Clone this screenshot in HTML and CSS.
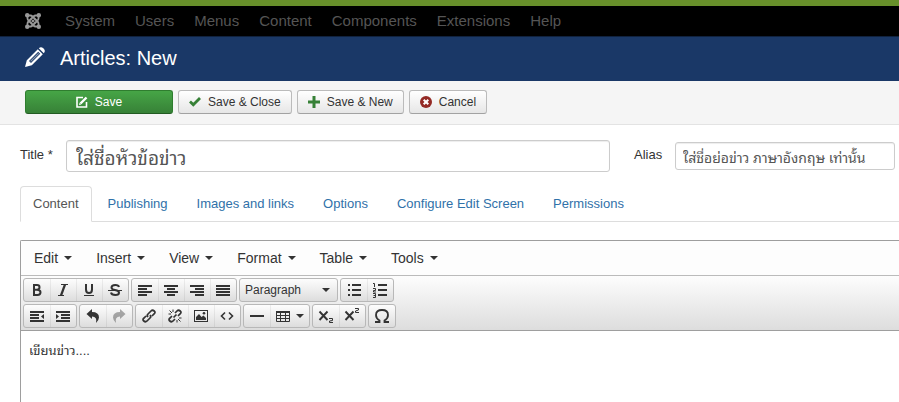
FILE: index.html
```html
<!DOCTYPE html>
<html lang="th">
<head>
    <meta charset="utf-8">
    <meta name="viewport" content="width=device-width, initial-scale=1">
    <title>Articles: New</title>
    <link rel="stylesheet" href="styles.css">
</head>
<body>
    <nav class="navbar">
        <a href="#" class="navbar-brand" aria-label="Control panel">
            <svg width="16" height="16" viewBox="0 0 16 16" fill="none" stroke="currentColor" stroke-width="1.800">
                <path d="M2.500 2V5.500Q2.500 6.500 3.500 7.500L8.500 12.500Q9.500 13.500 10.500 13.500H14"/>
                <path d="M13.500 14V10.500Q13.500 9.500 12.500 8.500L7.500 3.500Q6.500 2.500 5.500 2.500H2"/>
                <path d="M14 2.500H10.500Q9.500 2.500 8.500 3.500L3.500 8.500Q2.500 9.500 2.500 10.500V14"/>
                <path d="M2 13.500H5.500Q6.500 13.500 7.500 12.500L12.500 7.500Q13.500 6.500 13.500 5.500V2"/>
                <path d="M6.300 6.300L9.700 9.700M9.700 6.300L6.300 9.700" stroke-width="1.200"/>
                <g fill="currentColor" stroke="none">
                    <circle cx="2.200" cy="2.200" r="2.200"/>
                    <circle cx="13.800" cy="2.200" r="2.200"/>
                    <circle cx="2.200" cy="13.800" r="2.200"/>
                    <circle cx="13.800" cy="13.800" r="2.200"/>
                </g>
            </svg>
        </a>
        <a href="#">System</a>
        <a href="#">Users</a>
        <a href="#">Menus</a>
        <a href="#">Content</a>
        <a href="#">Components</a>
        <a href="#">Extensions</a>
        <a href="#">Help</a>
    </nav>

    <header class="header">
        <svg width="20" height="20" viewBox="0 0 20 20" fill="currentColor">
            <path fill-rule="evenodd" d="M0 20L1.800 13.200L12.800 2.200L17.800 7.200L6.800 18.200ZM4 14L6 16L15.200 6.800L13.200 4.800Z"/>
            <path d="M5.200 14L13.300 5.900L14.100 6.700L6 14.800Z" opacity=".5"/>
            <path d="M13.800 1.200Q16 -1 18.500 1.500Q21 4 18.800 6.200Z"/>
        </svg>
        <h1>Articles: New</h1>
    </header>

    <div class="actions">
        <button type="button" class="btn btn--success">
            <svg width="12" height="12" viewBox="0 0 12 12" fill="none" stroke="currentColor">
                <path d="M7 1.500H1V11H10.500V6" stroke-width="1.600"/>
                <path d="M4.500 7.500L10.500 1.500" stroke-width="2.400"/>
                <path d="M3 9L3.600 6.700L5.300 8.400Z" fill="currentColor" stroke="none"/>
            </svg>
            Save
        </button>
        <button type="button" class="btn">
            <svg class="icon--green" width="12" height="12" viewBox="0 0 12 12" fill="none" stroke="currentColor" stroke-width="2.800">
                <path d="M1 5.500L4.300 8.800L11 2"/>
            </svg>
            Save &amp; Close
        </button>
        <button type="button" class="btn">
            <svg class="icon--green" width="12" height="12" viewBox="0 0 12 12" fill="none" stroke="currentColor" stroke-width="3">
                <path d="M6 0V12M0 6H12"/>
            </svg>
            Save &amp; New
        </button>
        <button type="button" class="btn">
            <svg class="icon--red" width="12" height="12" viewBox="0 0 12 12">
                <circle cx="6" cy="6" r="6" fill="currentColor"/>
                <path d="M3.700 3.700L8.300 8.300M8.300 3.700L3.700 8.300" stroke="#fff" stroke-width="2"/>
            </svg>
            Cancel
        </button>
    </div>

    <main class="main">
        <form class="title-row">
            <label for="title">Title *</label>
            <input type="text" id="title" class="text-input text-input--large" value="ใส่ชื่อหัวข้อข่าว">
            <label for="alias" class="label--alias">Alias</label>
            <input type="text" id="alias" class="text-input text-input--alias" value="ใส่ชื่อย่อข่าว ภาษาอังกฤษ เท่านั้น">
        </form>

        <div class="tabs">
            <a href="#" class="tab tab--active">Content</a>
            <a href="#" class="tab">Publishing</a>
            <a href="#" class="tab">Images and links</a>
            <a href="#" class="tab">Options</a>
            <a href="#" class="tab">Configure Edit Screen</a>
            <a href="#" class="tab">Permissions</a>
        </div>

        <div class="editor">
            <div class="menubar">
                <button type="button">Edit<span class="caret"></span></button>
                <button type="button">Insert<span class="caret"></span></button>
                <button type="button">View<span class="caret"></span></button>
                <button type="button">Format<span class="caret"></span></button>
                <button type="button">Table<span class="caret"></span></button>
                <button type="button">Tools<span class="caret"></span></button>
            </div>

            <div class="toolbar">
                <div class="toolbar-row">
                    <div class="group">
                        <button type="button" aria-label="Bold">
                            <svg viewBox="0 0 16 16" fill="none" stroke="currentColor" stroke-width="2">
                                <path d="M5 3H8Q10.500 3 10.500 5.300Q10.500 7.700 8 7.700H5M8 7.700Q11.500 7.700 11.500 10.300Q11.500 13 8.500 13H5M5 2V14"/>
                            </svg>
                        </button>
                        <button type="button" aria-label="Italic">
                            <svg viewBox="0 0 16 16" fill="none" stroke="currentColor">
                                <path d="M6 2.500H13M3 13.500H9" stroke-width="1"/>
                                <path d="M10 2.500L6 13.500" stroke-width="2.200"/>
                            </svg>
                        </button>
                        <button type="button" aria-label="Underline">
                            <svg viewBox="0 0 16 16" fill="none" stroke="currentColor">
                                <path d="M5 2V7.500Q5 11 8 11T11 7.500V2" stroke-width="2"/>
                                <path d="M3 13.500H13"/>
                            </svg>
                        </button>
                        <button type="button" aria-label="Strikethrough">
                            <svg viewBox="0 0 16 16" fill="none" stroke="currentColor">
                                <path d="M12 5Q11.500 3 8.300 3Q4.500 3 4.500 5.500Q4.500 7.400 8 8Q12 8.600 12 10.700Q12 13 8.300 13Q4.500 13 4 10.500" stroke-width="2"/>
                                <path d="M1 8.500H15"/>
                            </svg>
                        </button>
                    </div>
                    <div class="group">
                        <button type="button" aria-label="Align left">
                            <svg viewBox="0 0 16 16"><path d="M1 3H15V5H1ZM1 6H10V8H1ZM1 9H15V11H1ZM1 12H10V14H1Z"/></svg>
                        </button>
                        <button type="button" aria-label="Align center">
                            <svg viewBox="0 0 16 16"><path d="M1 3H15V5H1ZM4 6H12V8H4ZM1 9H15V11H1ZM4 12H12V14H4Z"/></svg>
                        </button>
                        <button type="button" aria-label="Align right">
                            <svg viewBox="0 0 16 16"><path d="M1 3H15V5H1ZM6 6H15V8H6ZM1 9H15V11H1ZM6 12H15V14H6Z"/></svg>
                        </button>
                        <button type="button" aria-label="Justify">
                            <svg viewBox="0 0 16 16"><path d="M1 3H15V5H1ZM1 6H15V8H1ZM1 9H15V11H1ZM1 12H15V14H1Z"/></svg>
                        </button>
                    </div>
                    <div class="group">
                        <button type="button" class="format-btn">Paragraph<span class="caret"></span></button>
                    </div>
                    <div class="group">
                        <button type="button" aria-label="Bullet list">
                            <svg viewBox="0 0 16 16"><path d="M2 2H4V4H2ZM2 7H4V9H2ZM2 12H4V14H2ZM6 2H15V4H6ZM6 7H15V9H6ZM6 12H15V14H6Z"/></svg>
                        </button>
                        <button type="button" aria-label="Numbered list">
                            <svg viewBox="0 0 16 16">
                                <path d="M6 2H15V4H6ZM6 7H15V9H6ZM6 12H15V14H6Z"/>
                                <path d="M1 1.500H2.500V5M1 6.500H3.500V8.500H1.500V10H4M1 11.500H3.500V15.500H1M1.500 13.500H3.500" fill="none" stroke="currentColor"/>
                            </svg>
                        </button>
                    </div>
                </div>

                <div class="toolbar-row">
                    <div class="group">
                        <button type="button" aria-label="Decrease indent">
                            <svg viewBox="0 0 16 16"><path d="M1 3H15V5H1ZM1 6H10V8H1ZM1 9H10V11H1ZM1 12H15V14H1ZM15 6V11L12 8.500Z"/></svg>
                        </button>
                        <button type="button" aria-label="Increase indent">
                            <svg viewBox="0 0 16 16"><path d="M1 3H15V5H1ZM6 6H15V8H6ZM6 9H15V11H6ZM1 12H15V14H1ZM1 6V11L4 8.500Z"/></svg>
                        </button>
                    </div>
                    <div class="group">
                        <button type="button" aria-label="Undo">
                            <svg viewBox="0 0 16 16"><path d="M1.500 6L7 1V4Q14 4 14 9.500Q14 12 11 15Q12.500 8.500 7 8.500V11Z"/></svg>
                        </button>
                        <button type="button" aria-label="Redo" disabled>
                            <svg viewBox="0 0 16 16"><path d="M14.500 6L9 1V4Q2 4 2 9.500Q2 12 5 15Q3.500 8.500 9 8.500V11Z"/></svg>
                        </button>
                    </div>
                    <div class="group">
                        <button type="button" aria-label="Insert link">
                            <svg viewBox="0 0 16 16" fill="none" stroke="currentColor" stroke-width="1.700">
                                <path d="M7 9Q5.500 7.500 7 6L10 3Q11.500 1.500 13.200 3T13 6L11 8M9 7Q10.500 8.500 9 10L6 13Q4.500 14.500 2.800 13T3 10L5 8"/>
                            </svg>
                        </button>
                        <button type="button" aria-label="Remove link">
                            <svg viewBox="0 0 16 16" fill="none" stroke="currentColor" stroke-width="1.700">
                                <path d="M8 5L10 3Q11.500 1.500 13.200 3T13 6L11 8M8 11L6 13Q4.500 14.500 2.800 13T3 10L5 8M6.500 9.500L9.500 6.500"/>
                                <path d="M2.500 2.500L5 5M6 1.500V4M1.500 6H4M11 11L13.500 13.500M10 12V14.500M12 10H14.500" stroke-width="1"/>
                            </svg>
                        </button>
                        <button type="button" aria-label="Insert image">
                            <svg viewBox="0 0 16 16">
                                <path fill-rule="evenodd" d="M1 2H15V14H1ZM2 3V13H14V3Z"/>
                                <path d="M3 12V9L6 6L8.500 9L10.500 7.500L13 10V12Z"/>
                                <circle cx="11" cy="5.300" r="1.300"/>
                            </svg>
                        </button>
                        <button type="button" aria-label="Source code">
                            <svg viewBox="0 0 16 16" fill="none" stroke="currentColor" stroke-width="1.600">
                                <path d="M6 4.500L2.500 8L6 11.500M10 4.500L13.500 8L10 11.500"/>
                            </svg>
                        </button>
                    </div>
                    <div class="group">
                        <button type="button" aria-label="Horizontal line">
                            <svg viewBox="0 0 16 16"><path d="M1 7H15V9H1Z"/></svg>
                        </button>
                        <button type="button" class="table-btn" aria-label="Table">
                            <svg viewBox="0 0 16 16" fill="none" stroke="currentColor">
                                <path d="M1.500 3V13.500H14.500V3M5.500 3V13.500M10.500 3V13.500M1.500 7.500H14.500M1.500 10.500H14.500"/>
                                <path d="M1 4H15" stroke-width="2"/>
                            </svg>
                            <span class="caret"></span>
                        </button>
                    </div>
                    <div class="group">
                        <button type="button" aria-label="Subscript">
                            <svg viewBox="0 0 16 16" fill="none" stroke="currentColor">
                                <path d="M1.500 3.500L9.500 12M9.500 3.500L1.500 12" stroke-width="1.900"/>
                                <path d="M11 10.500H14.500V12.500L11.500 13V14.500H15"/>
                            </svg>
                        </button>
                        <button type="button" aria-label="Superscript">
                            <svg viewBox="0 0 16 16" fill="none" stroke="currentColor">
                                <path d="M1.500 3.500L9.500 12M9.500 3.500L1.500 12" stroke-width="1.900"/>
                                <path d="M11 .5H14.500V2L11.500 3V4.500H15"/>
                            </svg>
                        </button>
                    </div>
                    <div class="group">
                        <button type="button" aria-label="Special character">
                            <svg viewBox="0 0 16 16" fill="none" stroke="currentColor" stroke-width="1.800">
                                <path d="M1 14H5.500V12.500Q2 10.500 2 7Q2 2 8 2T14 7Q14 10.500 10.500 12.500V14H15"/>
                            </svg>
                        </button>
                    </div>
                </div>
            </div>

            <div class="editor-content" contenteditable="true">เขียนข่าว....</div>
        </div>
    </main>
</body>
</html>
```

FILE: styles.css
```css
:root {
    --border-radius: 3px;
    --text: #333333;
    --link: #3071a9;
}

*{
    box-sizing: border-box;
}

body{
    background-color: #ffffff;
    color: var(--text);
    display: flex;
    flex-direction: column;
    font-family: "Liberation Sans", "Noto Sans Thai Looped", Loma, "Noto Sans Thai", sans-serif;
    font-size: 13px;
    line-height: 18px;
    margin: 0;
    min-height: 100vh;
}

button,
input{
    color: inherit;
    font: inherit;
}

a{
    text-decoration: none;
}

svg{
    display: block;
    flex-shrink: 0;
}

.navbar{
    align-items: center;
    background-color: #000000;
    border-bottom: 1px solid #10223e;
    border-top: 6px solid #68902b;
    display: flex;
    font-size: 15px;
    gap: 20px;
    min-height: 37px;
    padding: 0 25px;
}

.navbar a{
    color: #555555;
}

.navbar .navbar-brand{
    color: #999999;
    margin-right: 4px;
}

.header{
    align-items: center;
    background-color: #1a3867;
    color: #ffffff;
    display: flex;
    gap: 15px;
    min-height: 44px;
    padding: 0 25px 2px;
}

.header svg{
    margin-bottom: 2px;
}

.header h1{
    font-size: 20px;
    font-weight: normal;
    line-height: 24px;
    margin: 0;
}

.actions{
    background-color: #f5f5f5;
    border-bottom: 1px solid #e3e3e3;
    display: flex;
    gap: 5px;
    padding: 9px 25px 10px;
}

.btn{
    align-items: center;
    background-image: linear-gradient(#ffffff, #e6e6e6);
    border: 1px solid #bbbbbb;
    border-bottom-color: #a2a2a2;
    border-radius: var(--border-radius);
    display: flex;
    font-size: 12px;
    gap: 7px;
    height: 24px;
    justify-content: center;
    padding: 0 10px;
}

.btn--success{
    background-image: linear-gradient(#46a546, #378137);
    border-color: #2f7d2f;
    border-bottom-color: #225b22;
    color: #ffffff;
    width: 148px;
}

.icon--green{
    color: #378137;
}

.icon--red{
    color: #942a25;
}

.main{
    display: flex;
    flex: 1;
    flex-direction: column;
    padding-left: 20px;
}

.title-row{
    align-items: center;
    display: flex;
    margin: 15px 4px 14px 0;
}

.title-row label{
    margin-bottom: 2px;
    width: 46px;
}

.title-row .label--alias{
    margin-left: 24px;
    width: 41px;
}

.text-input{
    border: 1px solid #cccccc;
    border-radius: var(--border-radius);
    box-shadow: inset 0 1px 1px rgba(0, 0, 0, 0.075);
    color: #555555;
    font-size: 14px;
    height: 28px;
    min-width: 0;
    padding: 0 7px;
}

.text-input--large{
    flex: 1;
    font-size: 19px;
    height: 32px;
    padding: 0 9px;
}

.text-input--alias{
    width: 220px;
}

.tabs{
    border-bottom: 1px solid #dddddd;
    display: flex;
    gap: 3px;
    margin-bottom: 18px;
}

.tab{
    border: 1px solid transparent;
    border-radius: 4px 4px 0 0;
    color: var(--link);
    margin-bottom: -1px;
    padding: 8px 12px;
}

.tab--active{
    background-color: #ffffff;
    border-color: #dddddd;
    border-bottom-color: #ffffff;
    color: #555555;
}

.editor{
    border: 1px solid #9e9e9e;
    border-bottom: none;
    border-radius: 2px 0 0 0;
    border-right: none;
    display: flex;
    flex: 1;
    flex-direction: column;
}

.menubar{
    background-color: #fdfdfd;
    border-bottom: 1px solid #bbbbbb;
    display: flex;
    gap: 2px;
    padding: 2px;
}

.menubar button{
    align-items: center;
    background: none;
    border: none;
    display: flex;
    font-size: 14px;
    gap: 6px;
    height: 30px;
    padding: 0 11px;
}

.caret{
    border-left: 4px solid transparent;
    border-right: 4px solid transparent;
    border-top: 4px solid currentColor;
}

.toolbar{
    background-image: linear-gradient(#fdfdfd, #dddddd);
    border-bottom: 1px solid #9e9e9e;
    display: flex;
    flex-direction: column;
    gap: 2px;
    padding: 2px;
}

.toolbar-row{
    display: flex;
    flex-wrap: wrap;
    gap: 2px;
}

.group{
    background-image: linear-gradient(#fdfdfd, #dddddd);
    border: 1px solid #b8b8b8;
    border-radius: var(--border-radius);
    display: flex;
    height: 24px;
}

.group button{
    align-items: center;
    background: none;
    border: none;
    display: flex;
    justify-content: center;
    padding: 0;
    width: 26px;
}

.group button + button{
    box-shadow: inset 1px 0 0 rgba(0, 0, 0, 0.06);
}

.group button:disabled svg{
    opacity: 0.4;
}

.group svg{
    fill: currentColor;
    height: 16px;
    width: 16px;
}

.group svg[fill="none"]{
    fill: none;
}

.group .format-btn{
    font-size: 12px;
    justify-content: space-between;
    padding: 0 7px 0 5px;
    width: 97px;
}

.group .table-btn{
    gap: 5px;
    width: 39px;
}

.editor-content{
    flex: 1;
    font-size: 13px;
    outline: none;
    padding: 11px 8px;
}
```
